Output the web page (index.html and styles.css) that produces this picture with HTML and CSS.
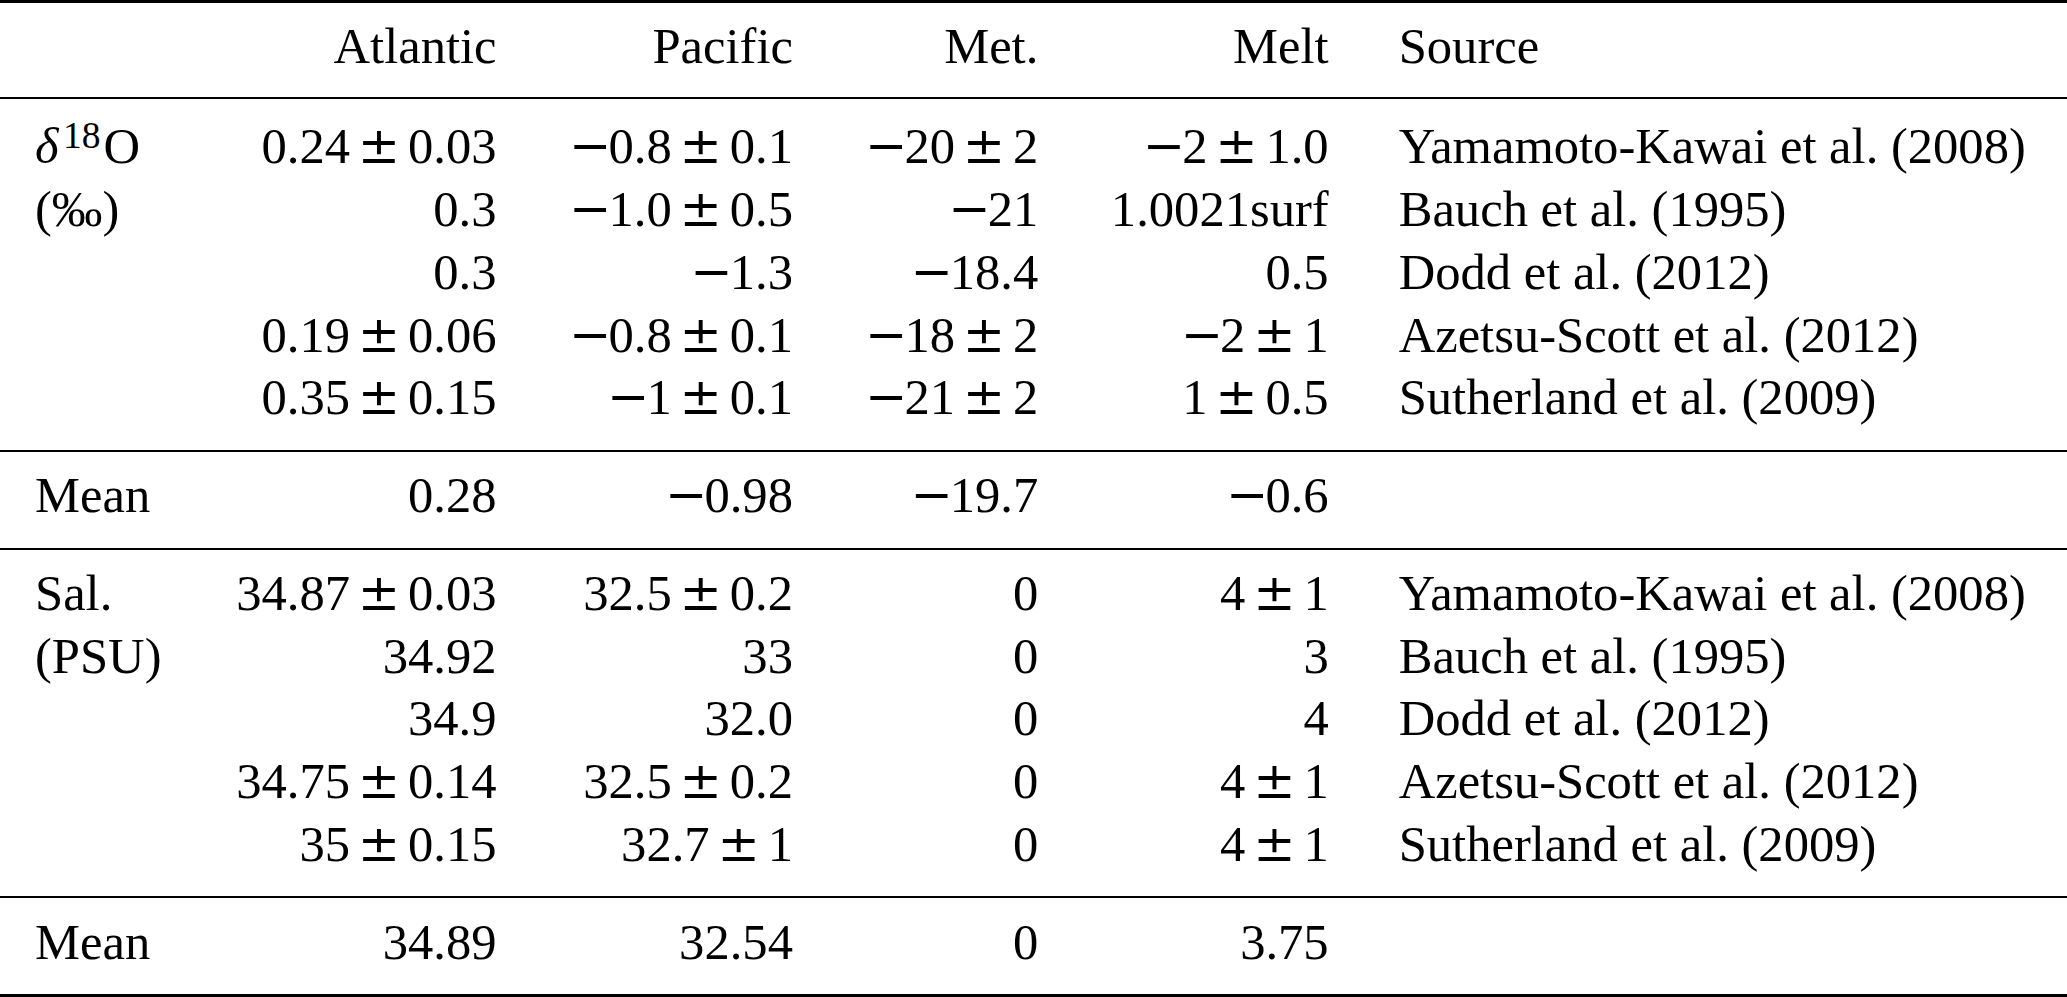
FILE: index.html
```html
<!DOCTYPE html>
<html lang="en">
<head>
<meta charset="utf-8">
<title>Endmember values</title>
<link rel="stylesheet" href="styles.css">
</head>
<body>
<table class="data">
  <thead>
    <tr class="head">
      <th class="lab"></th>
      <th class="num">Atlantic</th>
      <th class="num">Pacific</th>
      <th class="num">Met.</th>
      <th class="num">Melt</th>
      <th class="src">Source</th>
    </tr>
  </thead>
  <tbody>
    <tr class="first sup-row">
      <td class="lab"><i class="greek">δ</i><sup class="sup">18</sup>O</td>
      <td class="num">0.24<span class="pm">±</span>0.03</td>
      <td class="num"><span class="mi">−</span>0.8<span class="pm">±</span>0.1</td>
      <td class="num"><span class="mi">−</span>20<span class="pm">±</span>2</td>
      <td class="num"><span class="mi">−</span>2<span class="pm">±</span>1.0</td>
      <td class="src">Yamamoto-Kawai et al. (2008)</td>
    </tr>
    <tr>
      <td class="lab">(‰)</td>
      <td class="num">0.3</td>
      <td class="num"><span class="mi">−</span>1.0<span class="pm">±</span>0.5</td>
      <td class="num"><span class="mi">−</span>21</td>
      <td class="num">1.0021surf</td>
      <td class="src">Bauch et al. (1995)</td>
    </tr>
    <tr>
      <td class="lab"></td>
      <td class="num">0.3</td>
      <td class="num"><span class="mi">−</span>1.3</td>
      <td class="num"><span class="mi">−</span>18.4</td>
      <td class="num">0.5</td>
      <td class="src">Dodd et al. (2012)</td>
    </tr>
    <tr>
      <td class="lab"></td>
      <td class="num">0.19<span class="pm">±</span>0.06</td>
      <td class="num"><span class="mi">−</span>0.8<span class="pm">±</span>0.1</td>
      <td class="num"><span class="mi">−</span>18<span class="pm">±</span>2</td>
      <td class="num"><span class="mi">−</span>2<span class="pm">±</span>1</td>
      <td class="src">Azetsu-Scott et al. (2012)</td>
    </tr>
    <tr class="last">
      <td class="lab"></td>
      <td class="num">0.35<span class="pm">±</span>0.15</td>
      <td class="num"><span class="mi">−</span>1<span class="pm">±</span>0.1</td>
      <td class="num"><span class="mi">−</span>21<span class="pm">±</span>2</td>
      <td class="num">1<span class="pm">±</span>0.5</td>
      <td class="src">Sutherland et al. (2009)</td>
    </tr>
  </tbody>
  <tbody>
    <tr class="first last">
      <td class="lab">Mean</td>
      <td class="num">0.28</td>
      <td class="num"><span class="mi">−</span>0.98</td>
      <td class="num"><span class="mi">−</span>19.7</td>
      <td class="num"><span class="mi">−</span>0.6</td>
      <td class="src"></td>
    </tr>
  </tbody>
  <tbody>
    <tr class="first">
      <td class="lab">Sal.</td>
      <td class="num">34.87<span class="pm">±</span>0.03</td>
      <td class="num">32.5<span class="pm">±</span>0.2</td>
      <td class="num">0</td>
      <td class="num">4<span class="pm">±</span>1</td>
      <td class="src">Yamamoto-Kawai et al. (2008)</td>
    </tr>
    <tr>
      <td class="lab">(PSU)</td>
      <td class="num">34.92</td>
      <td class="num">33</td>
      <td class="num">0</td>
      <td class="num">3</td>
      <td class="src">Bauch et al. (1995)</td>
    </tr>
    <tr>
      <td class="lab"></td>
      <td class="num">34.9</td>
      <td class="num">32.0</td>
      <td class="num">0</td>
      <td class="num">4</td>
      <td class="src">Dodd et al. (2012)</td>
    </tr>
    <tr>
      <td class="lab"></td>
      <td class="num">34.75<span class="pm">±</span>0.14</td>
      <td class="num">32.5<span class="pm">±</span>0.2</td>
      <td class="num">0</td>
      <td class="num">4<span class="pm">±</span>1</td>
      <td class="src">Azetsu-Scott et al. (2012)</td>
    </tr>
    <tr class="last">
      <td class="lab"></td>
      <td class="num">35<span class="pm">±</span>0.15</td>
      <td class="num">32.7<span class="pm">±</span>1</td>
      <td class="num">0</td>
      <td class="num">4<span class="pm">±</span>1</td>
      <td class="src">Sutherland et al. (2009)</td>
    </tr>
  </tbody>
  <tbody class="final">
    <tr class="first last">
      <td class="lab">Mean</td>
      <td class="num">34.89</td>
      <td class="num">32.54</td>
      <td class="num">0</td>
      <td class="num">3.75</td>
      <td class="src"></td>
    </tr>
  </tbody>
</table>
</body>
</html>
```

FILE: styles.css
```css
html, body {
  margin: 0;
  padding: 0;
  background: #ffffff;
}

body {
  font-family: "Liberation Serif", "Times New Roman", serif;
  font-size: 50.6px;
  color: #000000;
}

.data {
  width: 2067px;
  border-collapse: separate;
  border-spacing: 0;
}

.data th,
.data td {
  font-weight: normal;
  line-height: 62.75px;
  padding: 0 35px;
  white-space: nowrap;
  vertical-align: baseline;
}

.data .lab,
.data .src {
  text-align: left;
}

.data .num {
  text-align: right;
}

/* header row: top rule + rule below */
.head th {
  border-top: 3px solid #000;
  border-bottom: 2px solid #000;
  padding-top: 11.85px;
  padding-bottom: 19.9px;
}

/* row group spacing */
.first td {
  padding-top: 12.25px;
}

.sup-row td {
  padding-top: 16px;
}

.last td {
  padding-bottom: 20.7px;
  border-bottom: 2px solid #000;
}

.final .last td {
  border-bottom-width: 3px;
}

/* math-ish glyphs */
.greek {
  font-style: italic;
}

.sup {
  font-size: 0.74em;
  line-height: 0;
  vertical-align: 0.42em;
  margin-left: 0.12em;
  margin-right: 0.08em;
}

.pm {
  display: inline-block;
  width: 1.146em;
  text-align: center;
  line-height: 1;
  font-family: "DejaVu Serif", serif;
}

.mi {
  display: inline-block;
  width: 0.778em;
  text-align: center;
  line-height: 1;
  font-family: "DejaVu Serif", serif;
}
```
